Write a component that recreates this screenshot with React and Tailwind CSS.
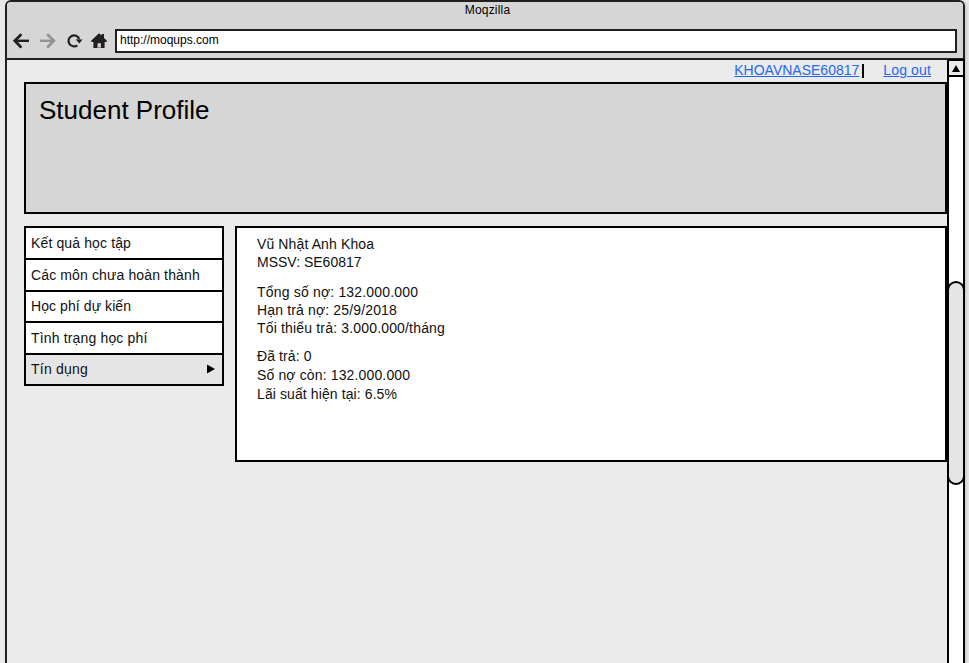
import React from 'react';

const menu = [
  { label: 'Kết quả học tập', size: 'h-8 tracking-[0.13px]' },
  { label: 'Các môn chưa hoàn thành', size: 'h-8 tracking-[0.13px]' },
  { label: 'Học phí dự kiến', size: 'h-[31px] pb-0.5 tracking-[0.08px]' },
  { label: 'Tình trạng học phí', size: 'h-8 tracking-[0.16px]' },
  { label: 'Tín dụng', size: 'h-[31px] pb-0.5 tracking-[0.22px]', active: true },
];

function NavIcons() {
  return (
    <div className="flex h-6 w-[108px] shrink-0 items-center">
      <svg className="ml-[5px] shrink-0" width="18" height="18" viewBox="0 0 18 18" fill="none" stroke="#231f20" strokeWidth="2.8" strokeLinecap="round">
        <path d="M8.6 3 2.8 8.8 8.6 14.8" />
        <path d="M4 8.8H17" strokeLinecap="butt" strokeWidth="2.4" />
      </svg>
      <svg className="ml-[9px] shrink-0" width="18" height="18" viewBox="0 0 18 18" fill="none" stroke="#939393" strokeWidth="2.8" strokeLinecap="round">
        <path d="M9 3 14.8 8.8 9 14.8" />
        <path d="M1 8.8H13.6" strokeLinecap="butt" strokeWidth="2.4" />
      </svg>
      <svg className="ml-[9px] shrink-0" width="18" height="18" viewBox="0 0 18 18" fill="none">
        <path d="M11.3 13.3A5.5 5.5 0 1 1 13.2 7" stroke="#231f20" strokeWidth="2.2" />
        <path d="M9.8 7.2 16.6 7.4 13.2 11.6z" fill="#231f20" />
      </svg>
      <svg className="ml-[7px] shrink-0" width="16" height="18" viewBox="0 0 16 18">
        <path fill="#231f20" d="M8 1.2 10.6 3.6V2H13v3.9L15.7 8.6V10H13.6V16H9.9v-4.7H6.6V16H2.4V10H.3V8.6z" />
        <path fill="#8c8a8b" d="M6.6 14.8h3.3V16H6.6z" />
      </svg>
    </div>
  );
}

function Scrollbar() {
  return (
    <div className="-mr-0.5 -mt-px flex w-[18px] shrink-0 flex-col border-x-2 border-black bg-white">
      <div className="-mx-0.5 flex h-[18px] items-center justify-center border-2 border-black bg-[#ebebeb]">
        <svg width="8" height="7" viewBox="0 0 8 7">
          <path d="M4 0 8 7H0z" />
        </svg>
      </div>
      <div className="-mx-0.5 mt-[204px] h-[204px] rounded-[9px] border-2 border-black bg-[#e5e5e5]" />
    </div>
  );
}

export default function App() {
  return (
    <div className="h-[663px] w-[969px] overflow-hidden bg-[#e9e9e9] pl-[5px] font-['Liberation_Sans',Arial,sans-serif] text-sm text-black">
      <div className="flex h-[663px] w-[960px] flex-col rounded-t-md border-2 border-b-0 border-[#231f20] bg-[#ebebeb] shadow-[2px_1px_3px_#ccc]">
        <header className="h-[58px] shrink-0 rounded-t border-b-2 border-[#231f20] bg-[#d6d6d6]">
          <div className="h-[27px] pl-[5px] text-center text-xs leading-4 tracking-[0.2px]">Moqzilla</div>
          <div className="flex pr-1.5">
            <NavIcons />
            <div className="h-6 flex-1 border-2 border-[#231f20] bg-white pl-[3px] text-xs leading-[18px]">
              http://moqups.com
            </div>
          </div>
        </header>
        <div className="flex min-h-0 flex-1">
          <main className="flex w-[940px] shrink-0 flex-col pl-[17px]">
            <nav className="flex h-[22px] justify-end pr-4 leading-5 text-[#2468f5]">
              <a className="underline">KHOAVNASE60817</a>
              <span className="ml-[3px] mr-[19px] mt-1 h-3.5 w-0.5 bg-black" />
              <a className="underline tracking-[0.14px]">Log out</a>
            </nav>
            <section className="h-[132px] border-2 border-black bg-[#d6d6d6] pl-[13px] pt-[9px]">
              <h1 className="text-[26px] leading-[34px]">Student Profile</h1>
            </section>
            <div className="mt-3 flex items-start gap-[11px]">
              <aside className="w-[200px] border-2 border-b-0 border-black text-[#111]">
                {menu.map((item) => (
                  <div
                    key={item.label}
                    className={`flex items-center justify-between border-b-2 border-black pl-[5px] pr-[7px] ${item.size} ${item.active ? 'bg-[#e5e5e5]' : 'bg-white'}`}
                  >
                    {item.label}
                    {item.active && (
                      <svg width="8" height="10" viewBox="0 0 8 10">
                        <path d="M0 .5 8 5 0 9.5z" />
                      </svg>
                    )}
                  </div>
                ))}
              </aside>
              <section className="h-[236px] flex-1 border-2 border-black bg-white pl-5 pt-[7px] text-[#111]">
                <div className="leading-[18px]">
                  <p className="tracking-[0.12px]">Vũ Nhật Anh Khoa</p>
                  <p>MSSV: SE60817</p>
                </div>
                <div className="mt-3 leading-[18px]">
                  <p className="tracking-[0.18px]">Tổng số nợ: 132.000.000</p>
                  <p className="tracking-[0.15px]">Hạn trả nợ: 25/9/2018</p>
                  <p className="tracking-[0.17px]">Tối thiểu trả: 3.000.000/tháng</p>
                </div>
                <div className="mt-2.5 leading-[19px]">
                  <p className="tracking-[0.1px]">Đã trả: 0</p>
                  <p className="tracking-[0.14px]">Số nợ còn: 132.000.000</p>
                  <p className="tracking-[0.1px]">Lãi suất hiện tại: 6.5%</p>
                </div>
              </section>
            </div>
          </main>
          <Scrollbar />
        </div>
      </div>
    </div>
  );
}
